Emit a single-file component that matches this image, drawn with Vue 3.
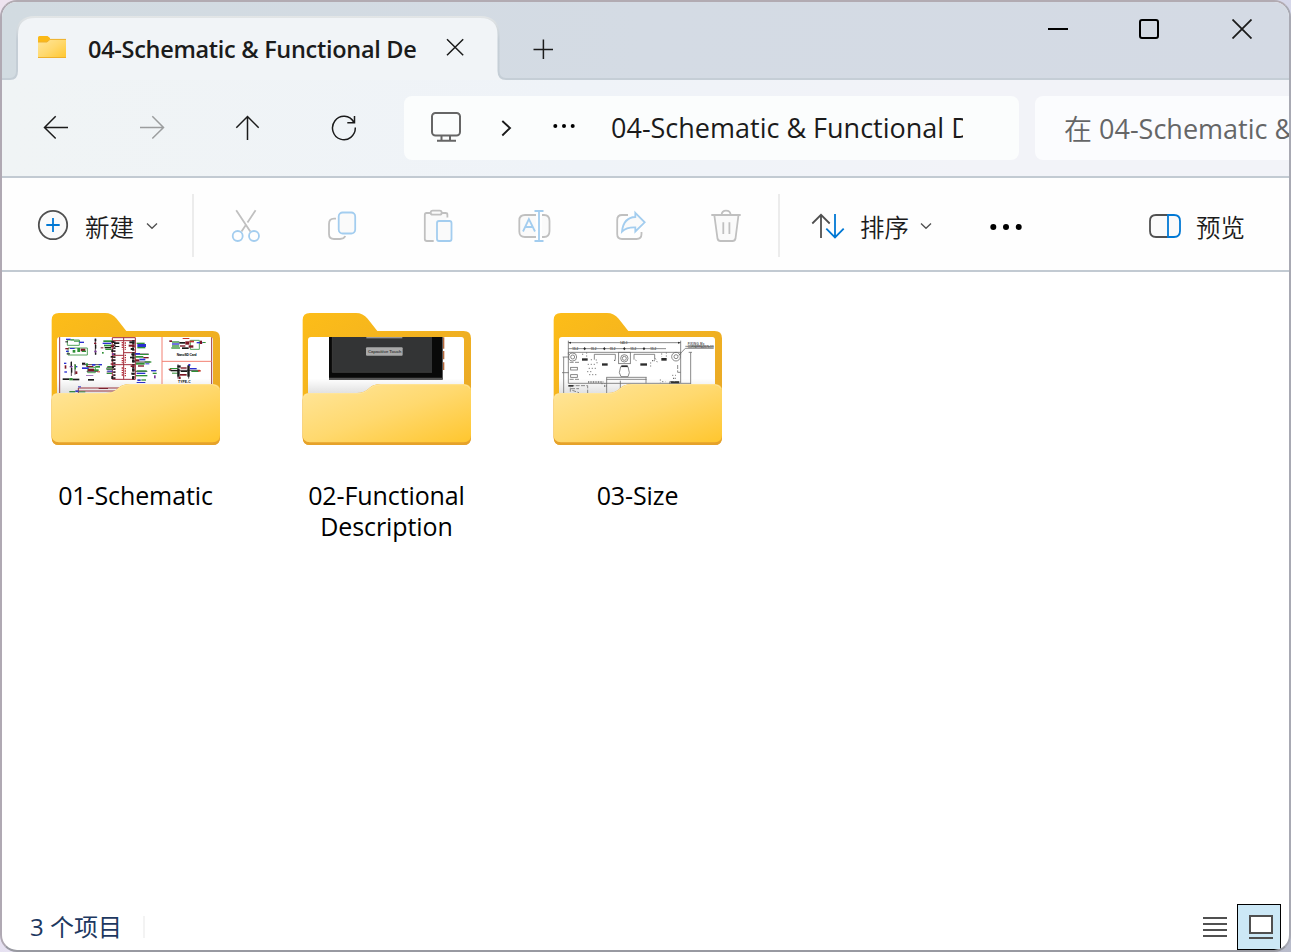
<script setup>
const folders = [
  { kind: 'schematic', lines: ['01-Schematic'] },
  { kind: 'screen', lines: ['02-Functional', 'Description'] },
  { kind: 'size', lines: ['03-Size'] },
]

const R = '#c0392b'
const D = '#7d1525'
const G = '#2f8f35'
const B = '#2b2fd0'
const K = '#1b1b1b'
const P = '#7a3a9a'

// [x, y, width, height, colour]
const parts = [
  [78, 116, 14, 4, B], [76, 124, 8, 3, K], [92, 118, 10, 3, G], [102, 122, 18, 3, G], [118, 125, 14, 4, B],
  [76, 144, 10, 4, D], [78, 152, 8, 4, B], [80, 160, 10, 3, K], [90, 144, 14, 3, B], [98, 150, 8, 8, G],
  [112, 144, 8, 12, G], [122, 146, 14, 8, D], [126, 152, 12, 4, G], [164, 116, 5, 8, K], [162, 128, 7, 4, D],
  [165, 134, 4, 12, K], [163, 152, 7, 5, P], [165, 158, 4, 6, K],
  [190, 121, 28, 5, G], [188, 128, 26, 4, B], [192, 134, 24, 5, G], [194, 141, 20, 4, K], [182, 142, 8, 3, D],
  [196, 146, 18, 4, G], [186, 156, 5, 5, G],
  [72, 188, 7, 4, B], [74, 196, 5, 10, D], [73, 214, 8, 4, B], [92, 186, 4, 12, K], [89, 198, 9, 4, P],
  [93, 204, 4, 14, K], [104, 194, 4, 14, G], [108, 198, 4, 4, B], [106, 214, 6, 8, D],
  [126, 188, 10, 5, K], [138, 190, 6, 10, G], [126, 202, 20, 5, B], [140, 198, 20, 3, D], [144, 206, 18, 7, D],
  [156, 192, 10, 5, B], [166, 198, 14, 5, G], [176, 192, 10, 4, B], [162, 208, 14, 5, G], [172, 214, 8, 3, R],
  [138, 226, 22, 2, P], [144, 237, 18, 5, K], [68, 235, 20, 5, K], [88, 234, 10, 7, G], [98, 236, 20, 5, K],
  [214, 123, 8, 6, K], [222, 127, 16, 5, K], [212, 136, 10, 5, D], [224, 138, 14, 3, K], [214, 148, 6, 8, K],
  [216, 160, 6, 5, P], [212, 168, 8, 5, K], [214, 178, 7, 6, K], [212, 190, 8, 4, D], [216, 198, 6, 6, K],
  [202, 198, 14, 3, G], [198, 205, 20, 3, G], [202, 212, 16, 3, B], [200, 219, 16, 3, G], [214, 228, 6, 9, K],
  [268, 124, 16, 6, K], [266, 134, 18, 6, D], [272, 144, 10, 6, K], [274, 160, 10, 6, K], [270, 170, 14, 5, K],
  [276, 180, 8, 6, K], [272, 196, 12, 5, D], [276, 206, 8, 6, K], [274, 218, 10, 6, K], [276, 230, 7, 8, K],
  [290, 128, 24, 4, G], [292, 132, 26, 9, B], [292, 141, 24, 4, G], [286, 159, 14, 5, B], [300, 162, 26, 3, G],
  [286, 168, 24, 5, G], [310, 171, 16, 4, D], [286, 178, 12, 6, D], [298, 176, 18, 5, B], [314, 184, 20, 4, G],
  [288, 188, 26, 6, G], [294, 196, 18, 4, D], [316, 190, 12, 3, B], [290, 211, 30, 4, G], [290, 218, 26, 4, B],
  [288, 225, 34, 4, G], [292, 238, 10, 5, B], [304, 238, 14, 4, G], [290, 246, 26, 3, B],
  [334, 210, 14, 4, B], [338, 218, 12, 4, G], [342, 226, 5, 9, P],
  [388, 121, 8, 5, D], [396, 124, 22, 4, G], [396, 130, 22, 4, B], [396, 136, 22, 4, G], [394, 142, 26, 4, G],
  [418, 126, 18, 5, K], [420, 136, 16, 4, D], [426, 142, 20, 5, K], [436, 124, 12, 10, D], [448, 122, 14, 5, R],
  [446, 136, 14, 7, D], [470, 126, 18, 4, B], [480, 122, 6, 10, D], [488, 126, 9, 3, G], [428, 114, 20, 3, R],
  [386, 206, 8, 4, R], [390, 204, 24, 3, G], [392, 210, 22, 4, K], [396, 218, 18, 3, G], [412, 196, 10, 7, K],
  [412, 206, 7, 24, K], [422, 202, 18, 4, D], [422, 212, 20, 4, K], [420, 222, 20, 5, D], [442, 196, 7, 34, K],
  [450, 204, 20, 4, B], [454, 212, 22, 4, G], [474, 210, 8, 5, R], [416, 230, 6, 7, D], [446, 192, 5, 6, B],
  [88, 273, 18, 4, G], [106, 271, 10, 5, B], [116, 274, 20, 3, G], [114, 259, 9, 3, B], [176, 264, 28, 3, D],
]
</script>

<template>
  <div class="desktop">
    <div class="window">
      <header class="tabs">
        <svg class="tab-shape" width="1291" height="80" viewBox="0 0 1291 80">
          <defs>
            <linearGradient id="edge" gradientUnits="userSpaceOnUse" x1="0" y1="16" x2="0" y2="40"><stop offset="0" stop-color="#e3e6e7" /><stop offset="1" stop-color="#c5ced6" /></linearGradient>
          </defs>
          <path d="M0 79H10Q17 79 17 71V35Q17 17 35 17H480Q498.500 17 498.500 35V71Q498.500 79 506 79H1291V80H0Z" class="tab-fill" />
          <path d="M0 79H10Q17 79 17 71V35Q17 17 35 17H480Q498.500 17 498.500 35V71Q498.500 79 506 79H1291" class="tab-line" />
        </svg>
        <div class="tab">
          <svg width="28" height="23" viewBox="38 36 28 23">
            <path d="M38 37.500Q38 36 39.500 36H47.500L50 38V42H38Z" fill="#fbb917" />
            <path d="M38 42H47L50 39H66V58H38Z" fill="url(#front)" />
            <path d="M38 42H47L50 39.400H66M38 57.500H66" fill="none" stroke="#eeb02c" />
          </svg>
          <span class="tab-title">04-Schematic &amp; Functional De</span>
          <svg class="tab-close" width="18" height="18" viewBox="446 38 18 18"><path class="ln" d="M447 39.300L463.200 55.200M463.200 39.300L447 55.200" /></svg>
        </div>
        <svg class="new-tab" width="20" height="20" viewBox="533 39 20 20"><path class="ln" d="M533.500 49.400H553M543.400 39.500V59" /></svg>
        <div class="controls">
          <svg width="20" height="20" viewBox="1048 19 20 20"><path d="M1048 29H1068" class="blk" /></svg>
          <svg width="20" height="20" viewBox="1140 19 20 20"><rect x="1140" y="20" width="18" height="18" rx="2" class="blk" /></svg>
          <svg width="20" height="20" viewBox="1232 19 20 20"><path d="M1232.500 19.500L1251.500 38.500M1251.500 19.500L1232.500 38.500" class="ln thick" /></svg>
        </div>
      </header>

      <nav class="nav">
        <svg width="26" height="26" viewBox="43 115 26 26"><path class="ln" d="M68 127.500H45M55.700 116.300L44.500 127.500L55.700 138.500" /></svg>
        <svg width="26" height="26" viewBox="139 115 26 26"><path class="ln dim" d="M140 127.500H163M152.300 116.300L163.500 127.500L152.300 138.500" /></svg>
        <svg width="26" height="26" viewBox="235 115 26 26"><path class="ln" d="M247.500 140V117M236.300 127.700L247.500 116.500L258.700 127.700" /></svg>
        <svg width="26" height="26" viewBox="331 115 26 26"><path class="ln" d="M355.300 127.500A11.400 11.700 0 1 1 353.700 122M354.500 116V122.700H347.300" /></svg>
        <div class="address">
          <svg width="32" height="32" viewBox="430 111 32 32">
            <rect x="432" y="113" width="28" height="22.500" rx="3.500" class="pc" />
            <path d="M441.500 136V140M450 136V140M437 140.700H456" class="pc" />
          </svg>
          <svg class="crumb" width="12" height="18" viewBox="500 119 12 18"><path class="ln chev" d="M502.300 121L510 128L502.300 135.500" /></svg>
          <svg class="more" width="24" height="6" viewBox="552 123 24 6"><circle cx="555.300" cy="126" r="2" /><circle cx="564" cy="126" r="2" /><circle cx="572.700" cy="126" r="2" /></svg>
          <span class="path">04-Schematic &amp; Functional D</span>
        </div>
        <div class="search"><span class="zh">在</span><span class="query">04-Schematic &amp;</span></div>
      </nav>

      <div class="commands">
        <div class="cmd new">
          <svg width="32" height="32" viewBox="37 209 32 32"><circle cx="53" cy="225" r="14.200" class="g dark wash" /><path d="M46.300 225H59.700M53 218V232" class="g blue" /></svg>
          <span>新建</span>
          <svg class="down" width="12" height="8" viewBox="146 222 12 8"><path d="M147 223.500L152 228.300L157 223.500" class="g dark slim" /></svg>
        </div>
        <i class="divider"></i>
        <div class="tools">
          <svg viewBox="229 208 34 34"><path class="g" d="M236.200 210.300L250.300 231.500M255.600 210.300L247.500 222.500M245.500 225.500L241.500 231.500" /><circle class="g sky" cx="237.700" cy="236" r="5" /><circle class="g sky" cx="254" cy="236" r="5" /></svg>
          <svg viewBox="325 208 34 34"><path class="g" d="M336 218.700H334Q329 218.700 329 224V234Q329 239 334 239H340Q344 239 345.300 236" /><rect class="g sky wash" x="338.700" y="212.500" width="16.500" height="21" rx="4" /></svg>
          <svg viewBox="421 208 34 34"><path class="g wash" d="M447.400 217.500V214.500Q447.400 213 445.500 213H426.500Q424.800 213 424.800 215V239Q424.800 241 427 241H433.700" /><rect class="g wash" x="430.700" y="210.700" width="11" height="4" rx="2" /><rect class="g sky wash" x="437" y="221" width="14.500" height="20" rx="2" /></svg>
          <svg viewBox="517 208 34 34"><path class="g wash" d="M536 215H525Q519.300 215 519.300 220.500V231.500Q519.300 237 525 237H536M542 215H544Q549.500 215 549.500 221V231Q549.500 237 544 237H542" /><path class="g sky" d="M539 211V241M534.500 211H543.500M534.500 241H543.500M523 231.500L528.900 219L535 231.500M525 227H533" /></svg>
          <svg viewBox="613 208 34 34"><path class="g" d="M628 215H622Q617.200 215 617.200 220V234Q617.200 239 622 239H636.500Q641.500 239 641.500 234V232" /><path class="g sky wash" d="M635.300 212.800L644.700 222.300L635.300 231.500V227.300Q626.500 227 622 231.500Q623.500 217.500 635.300 217Z" /></svg>
          <svg viewBox="709 208 34 34"><path class="g wash" d="M714.300 215L717.500 238.500Q718 241 720.500 241H732.500Q735 241 735.500 238.500L738.500 215" /><path class="g" d="M711.300 215H740.700M721.500 215Q722 210.700 726 210.700Q730.300 210.700 730.700 215M723.300 222.300V234M729.400 222.300V234" /></svg>
        </div>
        <i class="divider second"></i>
        <div class="cmd sort">
          <svg width="34" height="28" viewBox="811 212 34 28"><path class="g dark" d="M821 238V215M812.300 223.500L821 214.800L829.700 223.500" /><path class="g blue" d="M835 214V237M826.300 228.700L835 237.500L843.700 228.700" /></svg>
          <span>排序</span>
          <svg class="down" width="12" height="8" viewBox="920 222 12 8"><path d="M921 223.500L926 228.300L931 223.500" class="g dark slim" /></svg>
        </div>
        <svg class="ellipsis" width="34" height="8" viewBox="989 223 34 8"><circle cx="993.300" cy="227" r="3" /><circle cx="1006" cy="227" r="3" /><circle cx="1018.700" cy="227" r="3" /></svg>
        <div class="cmd preview">
          <svg width="34" height="26" viewBox="1148 213 34 26"><path class="g dark wash" d="M1168 215H1156Q1150 215 1150 221V231Q1150 237 1156 237H1168" /><path class="g blue wash" d="M1168 215H1174Q1180 215 1180 221V231Q1180 237 1174 237H1168Z" /></svg>
          <span>预览</span>
        </div>
      </div>

      <main class="files">
        <div v-for="f in folders" :key="f.kind" class="file">
          <svg width="170" height="134" viewBox="33 36 510 402">
            <defs>
              <linearGradient id="front" x1="0" y1="0" x2="1" y2="1"><stop offset="0" stop-color="#ffe69c" /><stop offset=".5" stop-color="#ffd96f" /><stop offset="1" stop-color="#ffc62e" /></linearGradient>
              <linearGradient id="back" x1="0" y1="0" x2="1" y2="1"><stop offset="0" stop-color="#fdbd18" /><stop offset="1" stop-color="#e5a52a" /></linearGradient>
              <linearGradient id="shade" x1="0" y1="0" x2="0" y2="1"><stop offset="0" stop-color="#777" stop-opacity="0" /><stop offset="1" stop-color="#666" stop-opacity=".3" /></linearGradient>
              <clipPath id="paper"><path d="M51 300V120Q51 111 60 111H511Q519 111 519 120V300Z" /></clipPath>
            </defs>
            <path d="M35 60Q35 39 57 39H195Q216 39 230 56L259 93H518Q540 93 540 115V410Q540 435 518 435H57Q35 435 35 410Z" fill="url(#back)" />
            <g clip-path="url(#paper)">
              <rect x="50" y="110" width="470" height="190" fill="#fff" />
              <g v-if="f.kind === 'schematic'">
                <path d="M59 110V300M515 110V300" stroke="#9a3843" stroke-width="3" fill="none" />
                <path d="M366 110V300M366 184H515" stroke="#f28072" stroke-width="3" fill="none" />
                <path d="M82 120H118V136H82ZM84 144H142V165H84ZM143 202H166V218H143ZM451 121H478V148H451Z" class="wire green" />
                <path d="M217 113H286V238H217ZM251 113V238M217 122H286M217 166H251M251 158H286M217 194H286M115 264H246M115 264V290M115 273H235" class="wire red" />
                <path d="M166 116V164M94 184V228M105 192V224M126 194H185M140 214H174M284 162H326M284 186H330M286 214H322M414 193V236M446 193V236M388 211H480M200 203H218M200 209H218M200 216H218M333 212H350" class="wire dark" />
                <path d="M247 126V148M247 173V190M247 202V228M256 127V150M256 164V188M256 204V230" stroke="#b82b39" stroke-width="4" stroke-dasharray="4 3" fill="none" />
                <path d="M280 120V238M223 124V238" stroke="#3a2028" stroke-width="7" stroke-dasharray="5 4" fill="none" />
                <rect v-for="(p, i) in parts" :key="i" :x="p[0]" :y="p[1]" :width="p[2]" :height="p[3]" :fill="p[4]" />
                <text x="410" y="167" class="tiny" textLength="60">NanoSD Card</text>
                <text x="414" y="250" class="tiny" textLength="38">TYPE-C</text>
              </g>
              <g v-else-if="f.kind === 'screen'">
                <path d="M458 112V210" stroke="#b86a3b" stroke-width="4" stroke-dasharray="34 7 25 9" />
                <rect x="114" y="108" width="341" height="131" fill="#090909" />
                <path d="M114 236H455" stroke="#555" stroke-width="5" />
                <rect x="124" y="108" width="299" height="109" fill="#333435" />
                <path d="M124 108V217H423" stroke="#4a4a4a" stroke-width="2" fill="none" />
                <rect x="226" y="108" width="108" height="7" fill="#999" />
                <rect x="225" y="142" width="110" height="25" rx="3" fill="#a9a9a9" />
                <text x="231" y="159" class="touch" textLength="100">Capacitive Touch</text>
              </g>
              <g v-else class="plan">
                <path d="M79 122V164M416 122V164M79 128H416M79 146H372M79 157H416V250H79ZM62 171H80M65 171V300M60 218H80M446 157V270M440 157H450M446 250H416" />
                <path d="M410 166L430 145H515M430 139H515" />
                <circle cx="92" cy="171" r="12" /><circle cx="92" cy="171" r="6" /><circle cx="402" cy="170" r="13" /><circle cx="402" cy="170" r="6" />
                <rect x="230" y="157" width="35" height="34" /><circle cx="247" cy="175" r="11" /><circle cx="247" cy="175" r="6" />
                <path d="M157 163H220M157 163V179M220 163V179M276 163H338M276 163V179M338 163V179M236 200L232 218L237 230H258L262 218L258 200ZM193 232H314M193 238H314M194 232V282M235 242V272M312 232V250" />
                <path d="M83 187H115M83 238H115M85 257H137V285M85 263V290M87 266H111M91 271L111 278M383 245H416M383 245V255M407 195V217M407 217H416" stroke-dasharray="12 4" />
                <rect x="86" y="202" width="20" height="8" /><rect x="86" y="224" width="20" height="8" />
                <g class="solid">
                  <rect x="120" y="175" width="17" height="7" /><rect x="180" y="190" width="17" height="7" /><rect x="238" y="196" width="19" height="5" /><rect x="295" y="190" width="20" height="7" /><rect x="358" y="174" width="16" height="8" />
                  <rect x="79" y="255" width="15" height="5" /><rect x="386" y="244" width="26" height="6" />
                  <path d="M79 128L87 125V131ZM416 128L408 125V131ZM128 141L132 146L128 151L124 146ZM187 141L191 146L187 151L183 146ZM247 141L251 146L247 151L243 146ZM306 141L310 146L306 151L302 146Z" />
                </g>
                <path d="M137 193H160M140 205H163M135 215H150M141 224H165M148 177V185M161 180H169M165 186V194M280 180L288 184M326 187V200M340 175L346 187M355 238V248M360 245H370M390 226H402M178 251H190M122 161V170M134 157V170M359 160V170M373 157V172" stroke-dasharray="4 5" />
                <path d="M138 246H184M186 258H194M216 181H222M330 182H338M393 235H402" stroke-width="4" stroke-dasharray="3 2" />
                <text x="234" y="132">145.0</text><text x="91" y="150">15.2</text><text x="146" y="150">15.2</text><text x="203" y="150">15.2</text><text x="265" y="150">15.2</text><text x="325" y="150">15.2</text>
                <text x="437" y="135" textLength="50">FIXING Mx</text><text x="437" y="145" textLength="78">CORNERRADIUS=3.0</text>
              </g>
              <path d="M50 235H520V300H50Z" fill="url(#shade)" />
            </g>
            <path d="M35 300Q35 282 54 279H198Q221 279 236 263Q249 252 270 252H518Q540 253 540 273V413Q540 435 518 435H57Q35 435 35 413Z" fill="#e6a22a" />
            <path d="M35 298Q35 279 54 279H198Q221 279 236 263Q249 252 270 252H518Q540 252 540 272V405Q540 427 518 427H57Q35 427 35 405Z" fill="url(#front)" />
            <path d="M39 292Q43 281 55 281H200Q222 280 237 265Q250 254 270 254H518Q532 255 537 266" fill="none" stroke="#ffe7a5" stroke-width="2" />
          </svg>
          <div class="name"><span v-for="l in f.lines" :key="l">{{ l }}</span></div>
        </div>
      </main>

      <footer class="status">
        <span class="count">3 个项目</span>
        <i></i>
        <svg class="list" width="24" height="20" viewBox="1203 917 24 20"><path d="M1203 918H1227M1203 924H1227M1203 930H1227M1203 936H1227" class="pc" /></svg>
        <div class="large"><svg width="24" height="26" viewBox="1249 916 24 26"><rect x="1250" y="918" width="22" height="17" class="pc white" /><path d="M1249 940H1273" class="pc" /></svg></div>
      </footer>
    </div>
  </div>
</template>

<style>
body { overflow: hidden; }
</style>

<style scoped>
.desktop { width: 1291px; height: 952px; background: linear-gradient(120deg, #eee3ef, #dfe0f4 60%, #b9bccb); }
.window {
  box-sizing: border-box; width: 1291px; height: 952px; overflow: hidden; position: relative;
  border: 2px solid #a4a2aa; border-color: #b2abb2 #a8a9b3 #9899a1 #b0a9b3; border-radius: 17px; background: #fff;
  display: flex; flex-direction: column; color: #1b1b1b;
  font-family: "Open Sans", "Noto Sans CJK SC", sans-serif;
}
svg { display: block; flex: none; }
.ln { fill: none; stroke: #1b1b1b; stroke-width: 1.5; }
.ln.dim { stroke: #9b9d9e; }
.ln.thick { stroke-width: 1.8; }
.ln.chev { stroke-width: 1.9; }
.blk { fill: none; stroke: #000; stroke-width: 2; }
.pc { fill: none; stroke: #666; stroke-width: 2; }
.g { fill: none; stroke: #c0c0c0; stroke-width: 1.8; }
.g.wash { fill: #fafafa; }
.g.dark { stroke: #505050; }
.g.blue { stroke: #0078d4; }
.g.sky { stroke: #a3cdef; }
.g.slim { stroke-width: 1.3; }

.tabs { height: 78px; flex: none; position: relative; display: flex; background: linear-gradient(90deg, #d2dbe1, #d4dbe4 50%, #d4dae4); }
.tab-shape { position: absolute; left: -2px; top: -2px; }
.tab-fill { fill: #f1f4f7; }
.tab-line { fill: none; stroke: url(#edge); stroke-width: 2; }
.tab { position: relative; margin-left: 15px; width: 482px; box-sizing: border-box; padding: 14px 0 0 21px; display: flex; align-items: center; height: 78px; }
.tab > svg:first-child { margin-top: -1px; }
.tab-title { width: 333px; margin-left: 22px; margin-top: 2px; overflow: hidden; white-space: nowrap; font-size: 23.5px; line-height: 34px; font-weight: 600; letter-spacing: -0.3px; }
.tab-close { margin: -2px 0 0 25px; }
.new-tab { position: relative; margin: 37px 0 0 34px; }
.controls { position: relative; margin: 17px 37px 0 auto; display: flex; gap: 72px; }
.controls svg:nth-child(2) { overflow: visible; margin: 0 1px 0 0; }
.controls svg:nth-child(3) { margin-left: -1px; }

.nav { height: 96px; flex: none; display: flex; align-items: center; border-bottom: 2px solid #c2cad2; background: linear-gradient(90deg, #f0f4f5, #eff3f8 45%, #f2f3f8 75%); padding-left: 41px; gap: 70px; }
.address { width: 615px; height: 64px; flex: none; margin-left: -23px; border-radius: 8px; background: #fbfdfd; display: flex; align-items: center; box-sizing: border-box; padding-left: 26px; }
.address > svg:first-child { margin-top: -2px; }
.crumb { margin-left: 38px; }
.more { margin: -4px 0 0 40px; }
.path { width: 352px; margin-left: 35px; overflow: hidden; white-space: nowrap; font-size: 27px; line-height: 36px; }
.search { flex: none; width: 300px; height: 64px; margin-left: -54px; border-radius: 8px; background: #fbfcfe; color: #656667; display: flex; align-items: center; box-sizing: border-box; padding-left: 29px; white-space: nowrap; font-size: 27px; }
.zh { font-weight: 350; font-size: 28px; }
.query { margin-left: 7px; margin-top: 1px; }

.commands { height: 92px; flex: none; display: flex; align-items: center; border-bottom: 2px solid #c2cad2; background: #fefefe; }
.cmd { display: flex; align-items: center; font-family: "Noto Sans CJK SC", sans-serif; font-size: 24.500px; font-weight: 350; line-height: 36px; }
.cmd.new { margin-left: 35px; width: 155px; }
.cmd.new span { margin: 6px 12px 0 16px; }
.cmd.new > svg:first-child { margin-top: 2px; }
.cmd.new > .down { margin-top: 4px; }
.divider { width: 2px; height: 63px; background: #ececec; margin-top: 3px; }
.tools { display: flex; gap: 62px; margin-left: 35px; margin-top: 2px; }
.tools svg { width: 34px; height: 34px; }
.divider.second { margin-left: 35px; }
.sort { margin-left: 31px; width: 122px; }
.sort span { margin: 6px 11px 0 15px; }
.sort > svg { margin-top: 4px; }
.ellipsis { margin-left: 56px; margin-top: 6px; }
.preview { margin-left: 125px; margin-top: 4px; }
.preview span { margin-left: 14px; margin-top: 2px; }

.files { flex: 1; display: flex; align-items: flex-start; padding: 40px 0 0 8px; }
.file { width: 251px; display: flex; flex-direction: column; align-items: center; }
.name { margin-top: 34px; display: flex; flex-direction: column; align-items: center; font-size: 25px; letter-spacing: -0.1px; line-height: 31px; color: #000; }
.wire { fill: none; stroke-width: 3; }
.wire.green { stroke: #55a35c; }
.wire.red { stroke: #a22c3b; }
.wire.dark { stroke: #574554; }
.tiny { font: bold 10px "Liberation Sans", sans-serif; }
.touch { font: bold 13px "Liberation Sans", sans-serif; fill: #444; }
.plan { fill: none; stroke: #6c6c6c; stroke-width: 2.4; }
.plan .solid { fill: #2c2c2c; stroke: none; }
.plan text { font: bold 9px "Liberation Sans", sans-serif; fill: #555; stroke: none; }

.status { height: 48px; flex: none; display: flex; align-items: center; box-sizing: border-box; padding-top: 2px; }
.count { margin-left: 28px; width: 113px; font-size: 24px; line-height: 36px; color: #1d3860; font-weight: 400; white-space: nowrap; }
.status i { width: 2px; height: 22px; background: #f3f3f3; }
.list { margin-left: auto; }
.list .pc, .large .pc { stroke: #505050; }
.large { width: 44px; height: 46px; box-sizing: border-box; margin: 0 8px 0 10px; border: 1px solid #000; background: #cce8f6; display: flex; align-items: center; padding-left: 11px; }
.pc.white { fill: #fff; }
</style>
